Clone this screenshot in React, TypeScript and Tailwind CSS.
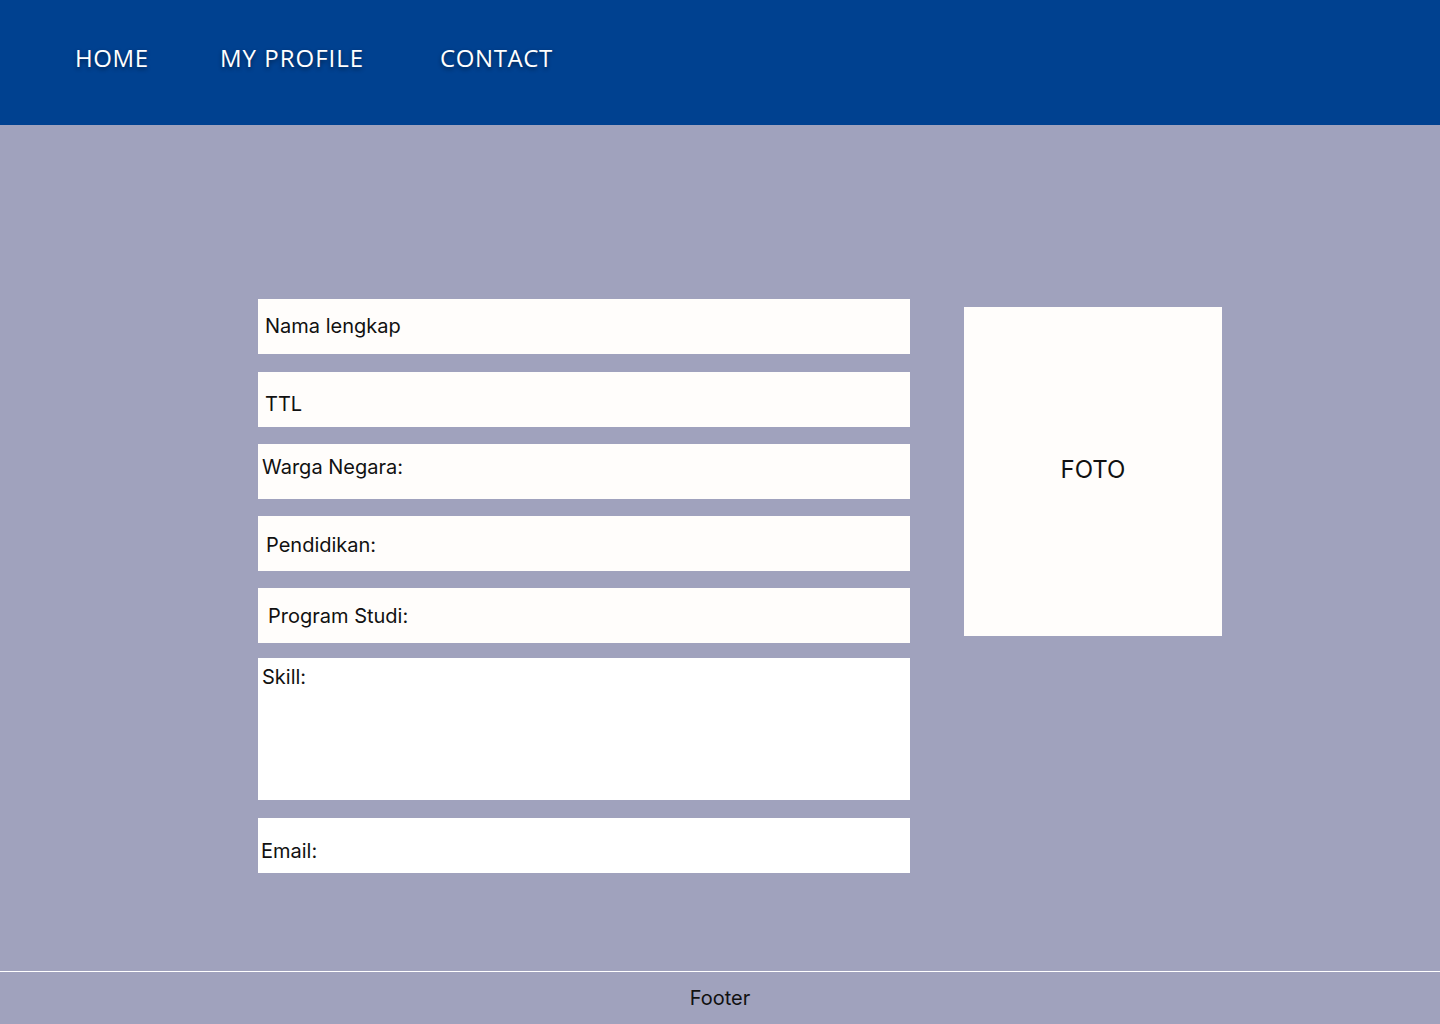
import React from 'react';

const fields = [
   { label: 'Nama lengkap', cls: 'h-[55px] items-center pl-[7px] pb-[1px] bg-[#fffdfb]' },
   { label: 'TTL', cls: 'h-[55px] items-center pl-[7px] pt-[9px] bg-[#fffdfb] mt-[18px]' },
   { label: 'Warga Negara:', cls: 'h-[55px] items-start pl-[4px] pt-[11px] bg-[#fffdfb] mt-[17px]' },
   { label: 'Pendidikan:', cls: 'h-[55px] items-center pl-[8px] pt-[3px] bg-[#fffdfb] mt-[17px]' },
   { label: 'Program Studi:', cls: 'h-[55px] items-center pl-[10px] bg-[#fffdfb] mt-[17px]' },
   { label: 'Skill:', cls: 'h-[142px] items-start pl-[4px] pt-[7px] bg-white mt-[15px]' },
   { label: 'Email:', cls: 'h-[55px] items-center pl-[3px] pt-[11px] bg-white mt-[18px]' },
];

export default function App() {
   return (
      <div className="min-h-screen flex flex-col bg-[#a0a2bd] font-['Inter','Liberation_Sans',sans-serif] text-[#111]">
         <header className="h-[125px] bg-[#004190] flex items-center pl-[75px] pb-[10px]">
            <nav className="flex text-white text-[24px] font-medium tracking-[0.6px] font-['Open_Sans','Liberation_Sans',sans-serif] [text-shadow:0_2px_4px_rgba(0,0,0,0.45)]">
               <a href="#" className="w-[145px]">HOME</a>
               <a href="#" className="w-[220px] tracking-[1px]">MY PROFILE</a>
               <a href="#">CONTACT</a>
            </nav>
         </header>

         <main className="flex-1 flex items-start pt-[174px] pl-[258px]">
            <div className="w-[652px] flex flex-col">
               {fields.map((f) => (
                  <div key={f.label} className={`flex text-[20px] leading-[24px] ${f.cls}`}>
                     {f.label}
                  </div>
               ))}
            </div>
            <div className="ml-[54px] mt-[8px] w-[258px] h-[329px] bg-[#fffdfb] flex items-center justify-center text-[24px] pb-[4px]">
               FOTO
            </div>
         </main>

         <footer className="h-[53px] border-t border-white flex items-center justify-center text-[20px] pb-[1px]">
            Footer
         </footer>
      </div>
   );
}
